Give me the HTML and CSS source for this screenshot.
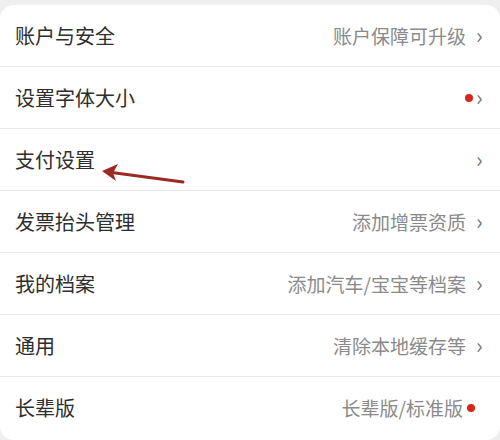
FILE: index.html
```html
<!DOCTYPE html>
<html lang="zh-CN">
<head>
    <meta charset="UTF-8">
    <meta name="viewport" content="width=device-width, initial-scale=1.0">
    <title>设置</title>
    <link rel="stylesheet" href="styles.css">
</head>
<body>
    <div class="card">
        <div class="row">
            <span class="title">账户与安全</span>
            <span class="extra">账户保障可升级</span>
            <span class="chev">›</span>
        </div>
        <div class="row">
            <span class="title">设置字体大小</span>
            <span class="dot"></span>
            <span class="chev tight">›</span>
        </div>
        <div class="row">
            <span class="title">支付设置</span>
            <span class="chev">›</span>
        </div>
        <div class="row">
            <span class="title">发票抬头管理</span>
            <span class="extra">添加增票资质</span>
            <span class="chev">›</span>
        </div>
        <div class="row">
            <span class="title">我的档案</span>
            <span class="extra">添加汽车/宝宝等档案</span>
            <span class="chev">›</span>
        </div>
        <div class="row">
            <span class="title">通用</span>
            <span class="extra">清除本地缓存等</span>
            <span class="chev">›</span>
        </div>
        <div class="row last">
            <span class="title">长辈版</span>
            <span class="extra">长辈版/标准版</span>
            <span class="dot end"></span>
        </div>

        <!-- 标注箭头 -->
        <svg class="arrow" width="500" height="440" viewBox="0 0 500 440">
            <line x1="183" y1="182" x2="108" y2="172" stroke="#9c2a22" stroke-width="3" stroke-linecap="round"/>
            <path d="M102 171 L118 164 L113 173 L116 181 Z" fill="#9c2a22"/>
        </svg>
    </div>
</body>
</html>
```

FILE: styles.css
```css
body {
    margin: 0;
    background: #efefef;
    font-family: 'Noto Sans CJK SC', 'Noto Sans', sans-serif;
    overflow: hidden;
}

.card {
    position: relative;
    background: #ffffff;
    margin-top: 5px;
    border-radius: 14px;
    height: 435px;
}

.row {
    display: flex;
    align-items: center;
    height: 61px;
    padding: 0 16px 0 15px;
    border-bottom: 1px solid #e9e9e9;
}

.row.last {
    border-bottom: none;
}

.title {
    font-size: 20px;
    color: #2e2e2e;
    flex: 1;
}

.extra {
    font-size: 19px;
    color: #8a8a8a;
}

.chev {
    font-size: 22px;
    color: #777;
    margin-left: 10px;
    width: 8px;
    line-height: 1;
    padding-bottom: 3px;
}

.chev.tight {
    margin-left: 1px;
}

.dot {
    width: 8px;
    height: 8px;
    border-radius: 50%;
    background: #d8261e;
    margin-right: 2px;
}

.dot.end {
    margin-left: 4px;
    margin-right: 9px;
}

.arrow {
    position: absolute;
    left: 0;
    top: -5px;
}
```
